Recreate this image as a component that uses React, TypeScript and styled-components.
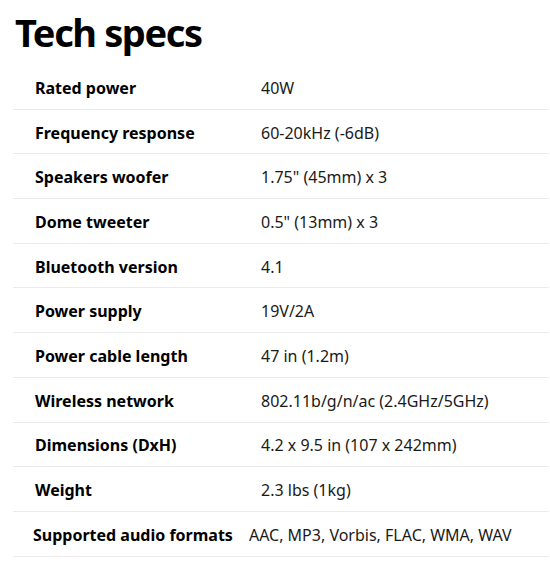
import React from "react";
import styled, { createGlobalStyle } from "styled-components";

const Global = createGlobalStyle`
  html, body { margin: 0; padding: 0; background: #fff; }
  body { font-family: "Noto Sans", "Open Sans", sans-serif; color: #111; }
`;

const Page = styled.div`
  padding: 0 1px 0 13px;
`;

const Title = styled.h1`
  margin: 0 0 10px;
  padding: 9px 0 0 2px;
  font-size: 38px;
  line-height: 46px;
  font-weight: 700;
  color: #000;
  letter-spacing: -1.4px;
`;

const Table = styled.div`
  display: flex;
  flex-direction: column;
`;

const Row = styled.div<{ $wide?: boolean }>`
  display: flex;
  align-items: center;
  height: 44.7px;
  box-sizing: border-box;
  padding: 3px 0 0 ${(p) => (p.$wide ? 20 : 22)}px;
  border-bottom: 1px solid #ebebeb;
  font-size: 16px;
  line-height: 23px;
`;

const Label = styled.div<{ $wide?: boolean }>`
  flex: 0 0 auto;
  width: ${(p) => (p.$wide ? "auto" : "226px")};
  padding-right: ${(p) => (p.$wide ? 16 : 0)}px;
  font-weight: 700;
  color: #000;
`;

const Value = styled.div`
  flex: 1 1 auto;
  color: #1a1a1a;
`;

const specs: [string, string][] = [
  ["Rated power", "40W"],
  ["Frequency response", "60-20kHz (-6dB)"],
  ["Speakers woofer", '1.75" (45mm) x 3'],
  ["Dome tweeter", '0.5" (13mm) x 3'],
  ["Bluetooth version", "4.1"],
  ["Power supply", "19V/2A"],
  ["Power cable length", "47 in (1.2m)"],
  ["Wireless network", "802.11b/g/n/ac (2.4GHz/5GHz)"],
  ["Dimensions (DxH)", "4.2 x 9.5 in (107 x 242mm)"],
  ["Weight", "2.3 lbs (1kg)"],
  ["Supported audio formats", "AAC, MP3, Vorbis, FLAC, WMA, WAV"],
];

export default function App() {
  return (
    <>
      <Global />
      <Page>
        <Title>Tech specs</Title>
        <Table>
          {specs.map(([k, v], i) => {
            const wide = i === specs.length - 1;
            return (
              <Row key={k} $wide={wide}>
                <Label $wide={wide}>{k}</Label>
                <Value>{v}</Value>
              </Row>
            );
          })}
        </Table>
      </Page>
    </>
  );
}
